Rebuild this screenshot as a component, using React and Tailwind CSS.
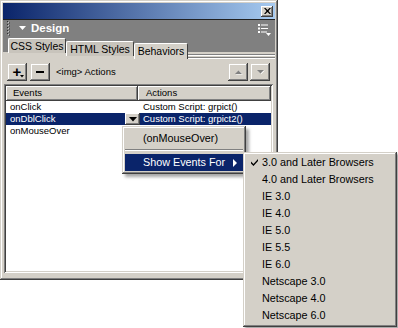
import React from "react";

const raised =
  "shadow-[inset_-1px_-1px_#404040,inset_1px_1px_#d4d0c8,inset_-2px_-2px_#808080,inset_2px_2px_#fff]";
const raisedThin = "shadow-[inset_-1px_-1px_#404040,inset_1px_1px_#fff,inset_-2px_-2px_#808080]";

const browsers = [
  "3.0 and Later Browsers",
  "4.0 and Later Browsers",
  "IE 3.0",
  "IE 4.0",
  "IE 5.0",
  "IE 5.5",
  "IE 6.0",
  "Netscape 3.0",
  "Netscape 4.0",
  "Netscape 6.0",
];

const rows = [
  { ev: "onClick", act: "Custom Script: grpict()" },
  { ev: "onDblClick", act: "Custom Script: grpict2()", sel: true },
  { ev: "onMouseOver", act: "" },
];

function ToolButton({ children, className = "" }) {
  return (
    <div className={`w-[20px] h-[18px] bg-[#d4d0c8] ${raised} relative flex items-center justify-center ${className}`}>
      {children}
    </div>
  );
}

export default function App() {
  return (
    <div className="relative w-[398px] h-[328px] bg-white overflow-hidden font-['Liberation_Sans',Arial,sans-serif] text-black select-none">
      {/* panel */}
      <div className={`w-[278px] h-[280px] bg-[#d4d0c8] p-[3px] flex flex-col ${raised}`}>
        {/* title bar */}
        <div className="h-[16px] bg-[linear-gradient(to_right,#0a246a,#a6caf0)] flex items-center justify-end pr-[2px]">
          <div className={`w-[12px] h-[11px] bg-[#d4d0c8] ${raisedThin} flex items-center justify-center`}>
            <svg width="7" height="6" viewBox="0 0 7 6">
              <path d="M0 0h1.5l2 2 2-2H7L4.5 3 7 6H5.5l-2-2-2 2H0l2.5-3z" fill="#000" />
            </svg>
          </div>
        </div>
        <div className="h-px bg-[#202020]" />

        {/* design header */}
        <div className="h-[17px] bg-[#808080] flex items-center relative">
          <svg className="ml-[4px]" width="4" height="15" viewBox="0 0 4 15">
            {[0, 3, 6, 9, 12].map((y) => (
              <g key={y}>
                <rect x="0" y={y} width="1" height="1" fill="#303030" />
                <rect x="1" y={y + 1} width="1" height="1" fill="#c8c8c8" />
                <rect x="2" y={y + 1.5} width="1" height="1" fill="#303030" />
              </g>
            ))}
          </svg>
          <svg className="ml-[8px]" width="8" height="5" viewBox="0 0 8 5">
            <path d="M0 0h7L3.5 4z" fill="#fff" />
          </svg>
          <span className="ml-[4px] text-[11.5px] font-bold text-white leading-none">Design</span>
          <svg className="ml-auto mr-[4px] mt-[2px]" width="13" height="12" viewBox="0 0 13 12">
            <g fill="#fff">
              <rect x="0" y="0" width="2" height="2" />
              <rect x="3" y="0.5" width="7" height="1" />
              <rect x="0" y="3.5" width="2" height="2" />
              <rect x="3" y="4" width="7" height="1" />
              <rect x="0" y="7" width="2" height="2" />
              <rect x="3" y="7.5" width="6" height="1" />
              <path d="M8 9h5l-2.5 3z" />
            </g>
          </svg>
        </div>

        {/* tabs */}
        <div className="h-[22px] flex items-start bg-[linear-gradient(to_bottom,#808080_15px,#d4d0c8_15px)]">
          <div className="w-[5px]" />
          <div className="mt-[1px] h-[15px] w-[58px] bg-[#c8c4bc] rounded-t-[2px] border-l border-t border-white border-r border-r-[#404040] flex items-center justify-center text-[10.5px] leading-none">
            CSS Styles
          </div>
          <div className="mt-[4px] h-[15px] w-[68px] bg-[#c8c4bc] rounded-t-[2px] border-l border-t border-white border-r border-r-[#404040] flex items-center justify-center text-[10.5px] leading-none">
            HTML Styles
          </div>
          <div className="mt-[6px] h-[16px] w-[54px] bg-[#d4d0c8] rounded-t-[2px] border-l border-t border-white border-r border-r-[#404040] flex items-center justify-center text-[10.5px] leading-none">
            Behaviors
          </div>
          <div className="flex-1 mt-[17px] flex flex-col">
            <div className="h-px bg-[#808080]" />
            <div className="h-px bg-white" />
            <div className="h-px" />
            <div className="h-px bg-[#808080]" />
            <div className="h-px bg-white" />
          </div>
        </div>

        {/* buttons row */}
        <div className="mt-[3px] h-[19px] flex items-center">
          <ToolButton className="ml-[4px]">
            <span className="text-[15px] font-bold leading-none -mt-[1px]">+</span>
            <svg className="absolute right-[3px] bottom-[3px]" width="4" height="3" viewBox="0 0 4 3">
              <path d="M0 0h4L2 2.5z" fill="#000" />
            </svg>
          </ToolButton>
          <ToolButton className="ml-[3px]">
            <div className="w-[8px] h-[2px] bg-black" />
          </ToolButton>
          <span className="ml-[6px] text-[9.5px] leading-none">&lt;img&gt; Actions</span>
          <ToolButton className="ml-auto">
            <svg width="9" height="6" viewBox="0 0 9 6">
              <path d="M1 5h7L4.5 1.5z" fill="#fff" transform="translate(0.8 0.6)" />
              <path d="M1 5h7L4.5 1.5z" fill="#808080" />
            </svg>
          </ToolButton>
          <ToolButton className="ml-[2px] mr-[5px]">
            <svg width="9" height="6" viewBox="0 0 9 6">
              <path d="M1 1h7L4.5 4.5z" fill="#fff" transform="translate(0.8 0.6)" />
              <path d="M1 1h7L4.5 4.5z" fill="#808080" />
            </svg>
          </ToolButton>
        </div>

        {/* list */}
        <div className="mt-[3px] mb-[4px] ml-[1px] mr-[2px] flex-1 bg-white p-[2px] shadow-[inset_1px_1px_#808080,inset_-1px_-1px_#fff,inset_2px_2px_#404040,inset_-2px_-2px_#d4d0c8]">
          <div className="h-[15px] flex text-[9.5px]">
            <div className={`w-[132px] bg-[#d4d0c8] ${raisedThin} flex items-center pl-[7px]`}>Events</div>
            <div className={`flex-1 bg-[#d4d0c8] ${raisedThin} flex items-center pl-[8px]`}>Actions</div>
          </div>
          {rows.map((r) => (
            <div
              key={r.ev}
              className={`h-[12px] flex items-center text-[9.5px] leading-none ${r.sel ? "bg-[#0a246a] text-white" : ""}`}
            >
              <div className="w-[134px] h-full flex items-center pl-[4px]">
                <span>{r.ev}</span>
                {r.sel && (
                  <div className={`ml-auto w-[15px] h-[12px] bg-[#d4d0c8] ${raisedThin} flex items-center justify-center`}>
                    <svg width="8" height="5" viewBox="0 0 8 5">
                      <path d="M0 0h8L4 4.5z" fill="#000" />
                    </svg>
                  </div>
                )}
              </div>
              <span className="pl-[3px]">{r.act}</span>
            </div>
          ))}
        </div>
      </div>

      {/* context menu */}
      <div
        className={`absolute left-[122px] top-[126px] w-[124px] h-[48px] bg-[#d4d0c8] p-[3px] text-[10.8px] leading-none shadow-[inset_-1px_-1px_#404040,inset_1px_1px_#d4d0c8,inset_-2px_-2px_#808080,inset_2px_2px_#fff,3px_3px_3px_rgba(0,0,0,0.35)]`}
      >
        <div className="h-[18px] flex items-center pl-[18px]">(onMouseOver)</div>
        <div className="mt-[2px] h-px bg-[#808080]" />
        <div className="h-px bg-white" />
        <div className="mt-[3px] h-[17px] bg-[#0a246a] text-white flex items-center pl-[18px] pr-[6px]">
          <span>Show Events For</span>
          <svg className="ml-auto" width="4" height="8" viewBox="0 0 4 8">
            <path d="M0 0l4 4-4 4z" fill="#fff" />
          </svg>
        </div>
      </div>

      {/* submenu */}
      <div className="absolute left-[243px] top-[152px] w-[154px] h-[175px] bg-[#d4d0c8] pt-[2px] text-[10.8px] leading-none shadow-[inset_-1px_-1px_#404040,inset_1px_1px_#d4d0c8,inset_-2px_-2px_#808080,inset_2px_2px_#fff,2px_2px_2px_rgba(0,0,0,0.35)]">
        {browsers.map((b, i) => (
          <div key={b} className="h-[17px] flex items-center relative pl-[19px]">
            {i === 0 && (
              <svg className="absolute left-[8px] top-[5px]" width="7" height="7" viewBox="0 0 7 7">
                <path d="M0 2.5l2.5 2.5L7 0v2L2.5 7 0 4.5z" fill="#000" />
              </svg>
            )}
            {b}
          </div>
        ))}
      </div>
    </div>
  );
}
